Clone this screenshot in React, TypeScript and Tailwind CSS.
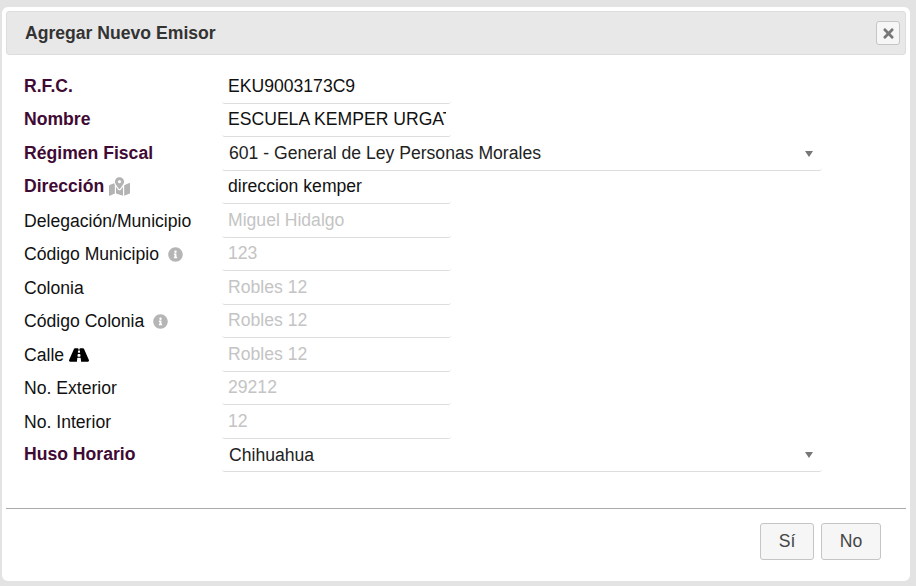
import { FaInfoCircle, FaMapMarkedAlt, FaRoad, FaTimes } from "react-icons/fa";

type Row = {
  label: string;
  value: string;
  required?: boolean;
  muted?: boolean;
  select?: boolean;
  icon?: React.ReactNode;
};

const infoIcon = <FaInfoCircle className="ml-[9px] text-[15px] text-[#b5b5b5]" />;

const rows: Row[] = [
  { label: "R.F.C.", value: "EKU9003173C9", required: true },
  { label: "Nombre", value: "ESCUELA KEMPER URGATE", required: true },
  { label: "Régimen Fiscal", value: "601 - General de Ley Personas Morales", required: true, select: true },
  {
    label: "Dirección",
    value: "direccion kemper",
    required: true,
    icon: <FaMapMarkedAlt className="ml-[5px] text-[21px] text-[#b3b3b3]" />,
  },
  { label: "Delegación/Municipio", value: "Miguel Hidalgo", muted: true },
  { label: "Código Municipio", value: "123", muted: true, icon: infoIcon },
  { label: "Colonia", value: "Robles 12", muted: true },
  { label: "Código Colonia", value: "Robles 12", muted: true, icon: infoIcon },
  { label: "Calle", value: "Robles 12", muted: true, icon: <FaRoad className="ml-[5px] text-[20px] text-black" /> },
  { label: "No. Exterior", value: "29212", muted: true },
  { label: "No. Interior", value: "12", muted: true },
  { label: "Huso Horario", value: "Chihuahua", required: true, select: true },
];

function FormRow({ row }: { row: Row }) {
  return (
    <div className="flex h-[33.5px] items-center">
      <label
        className={
          row.required
            ? "flex w-[198px] items-center pb-[2px] font-bold text-[#3f0a33]"
            : "flex w-[198px] items-center text-[#111]"
        }
      >
        {row.label}
        {row.icon}
      </label>
      {row.select ? (
        <div className="flex h-full w-[600px] items-center justify-between rounded-b-[3px] border-b border-[#ddd] pr-[9px] pl-[7px] text-[#222]">
          <span>{row.value}</span>
          <span className="mt-[1px] h-0 w-0 border-x-[4px] border-t-[6px] border-x-transparent border-t-[#777]" />
        </div>
      ) : (
        <input
          readOnly
          value={row.value}
          className={
            row.muted
              ? "h-full w-[229px] rounded-b-[3px] border-b border-[#ddd] pr-[5px] pl-[6px] text-[#c4c4c4] outline-none"
              : "h-full w-[229px] rounded-b-[3px] border-b border-[#ddd] pr-[5px] pl-[6px] text-[#111] outline-none"
          }
        />
      )}
    </div>
  );
}

export default function App() {
  return (
    <div className="h-[586px] w-[916px] overflow-hidden bg-[#e3e3e3] pt-[7px] pl-[2px] font-['Liberation_Sans',Arial,sans-serif] text-[17.6px]">
      <div className="flex h-[574px] w-[908px] flex-col rounded-[6px] bg-white px-[4px] pt-[4px]">
        <div className="flex h-[44px] items-center justify-between rounded-[3px] border border-[#ddd] bg-[#e8e8e8] pr-[5px] pl-[18px]">
          <h1 className="text-[17.6px] font-bold text-[#333]">Agregar Nuevo Emisor</h1>
          <button className="flex h-[24px] w-[24px] items-center justify-center rounded-[3px] border border-[#c5c5c5] bg-[#f6f6f6] text-[15px] text-[#777]">
            <FaTimes />
          </button>
        </div>
        <div className="px-[18px] pt-[15px]">
          {rows.map((row) => (
            <FormRow key={row.label} row={row} />
          ))}
        </div>
        <div className="mt-[36px] flex justify-end gap-[7px] border-t border-[#aaa] pt-[14px] pr-[25px]">
          <button className="h-[37px] w-[54px] rounded-[3px] border border-[#c5c5c5] bg-[#f6f6f6] text-[#454545]">Sí</button>
          <button className="h-[37px] w-[60px] rounded-[3px] border border-[#c5c5c5] bg-[#f6f6f6] text-[#454545]">No</button>
        </div>
      </div>
    </div>
  );
}
